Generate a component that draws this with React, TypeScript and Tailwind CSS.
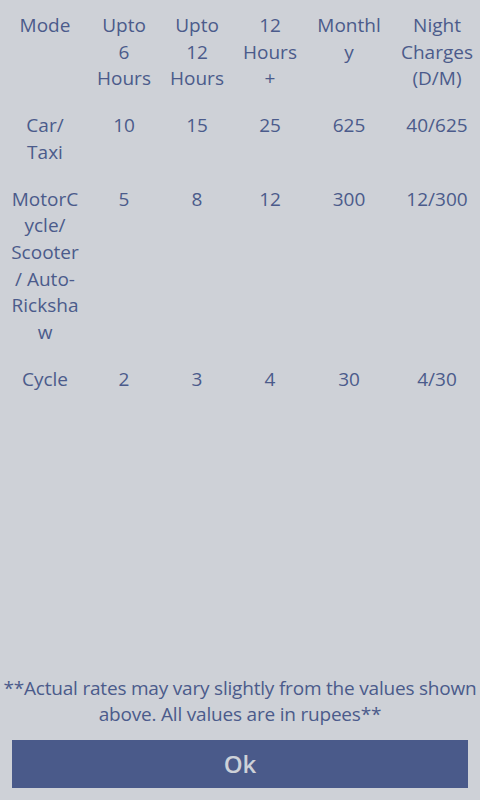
const COLS = ["w-[90px]", "w-[68px]", "w-[78px]", "w-[68px]", "w-[90px]", "w-[86px]"];

// rows are kept as explicit lines, to match the narrow phone table's wrapping
const ROWS: string[][][] = [
  [["Mode"], ["Upto", "6", "Hours"], ["Upto", "12", "Hours"], ["12", "Hours", "+"], ["Monthl", "y"], ["Night", "Charges", "(D/M)"]],
  [["Car/", "Taxi"], ["10"], ["15"], ["25"], ["625"], ["40/625"]],
  [["MotorC", "ycle/", "Scooter", "/ Auto-", "Ricksha", "w"], ["5"], ["8"], ["12"], ["300"], ["12/300"]],
  [["Cycle"], ["2"], ["3"], ["4"], ["30"], ["4/30"]],
];

function Cell({ lines, width }: { lines: string[]; width: string }) {
  return (
    <div className={`${width} shrink-0 flex flex-col items-center text-center`}>
      {lines.map((l, i) => (
        <span key={i} className="whitespace-nowrap">
          {l}
        </span>
      ))}
    </div>
  );
}

export default function App() {
  return (
    <div
      className="h-[800px] w-[480px] bg-[#ced1d7] text-[#4b5b8b] flex flex-col text-[19px] leading-[26.7px]"
      style={{ fontFamily: '"Open Sans", "Noto Sans", sans-serif' }}
    >
      <div className="pt-[2px]">
        {ROWS.map((row, r) => (
          <div key={r} className="flex py-[10px]">
            {row.map((lines, c) => (
              <Cell key={c} lines={lines} width={COLS[c]} />
            ))}
          </div>
        ))}
      </div>

      <div className="flex-1" />

      <p className="text-center tracking-[-0.2px] whitespace-nowrap">
        **Actual rates may vary slightly from the values shown
        <br />
        above. All values are in rupees**
      </p>

      <div className="px-[12px] pt-[12px] pb-[12px]">
        <button
          type="button"
          className="w-full h-[48px] bg-[#4a5a8a] text-[#cdd1d8] text-[24px] font-semibold flex items-center justify-center"
        >
          Ok
        </button>
      </div>
    </div>
  );
}
